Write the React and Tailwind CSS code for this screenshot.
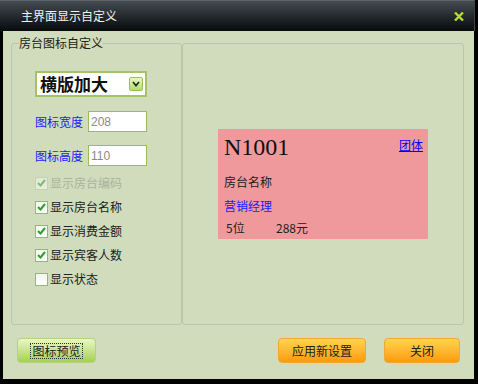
const checks = [
  { label: '显示房台编码', checked: true, disabled: true },
  { label: '显示房台名称', checked: true },
  { label: '显示消费金额', checked: true },
  { label: '显示宾客人数', checked: true },
  { label: '显示状态', checked: false },
];

function CheckBox({ checked, disabled }) {
  return (
    <span
      className={
        'w-[13px] h-[13px] flex items-center justify-center border bg-gradient-to-b from-[#f4f4f0] to-[#ffffff] ' +
        (disabled ? 'border-[#bcc8b0] opacity-50' : 'border-[#98b47c]')
      }
    >
      {checked && (
        <svg width="9" height="8" viewBox="0 0 9 8">
          <path d="M1 4 L3.5 6.5 L8 1" fill="none" stroke="#2ca02c" strokeWidth="2" />
        </svg>
      )}
    </span>
  );
}

function SizeField({ label, value }) {
  return (
    <div className="flex items-center h-[21px]">
      <span className="text-[#1a1aff] w-[53px] leading-[16px]">{label}</span>
      <div className="w-[59px] h-[21px] border border-[#9cbc5c] bg-white flex items-center pl-[2px] font-['Liberation_Sans',sans-serif] text-[12px] text-[#8a8a8a]">
        {value}
      </div>
    </div>
  );
}

export default function App() {
  return (
    <div className="w-[478px] h-[384px] bg-black flex flex-col font-['Noto_Sans_CJK_SC',sans-serif] text-[12px] text-[#202020]">
      {/* title bar */}
      <div className="h-[31px] w-[475px] flex items-center justify-between border-t border-[#5c6468] border-r border-r-[#3a4246] bg-gradient-to-b from-[#454d52] to-[#080b0d] pl-[21px] pr-[10px]">
        <span className="text-[#f2f2f2] leading-[16px]">主界面显示自定义</span>
        <svg width="10" height="9" viewBox="0 0 10 9">
          <path d="M1 0.5 L9 8.5 M9 0.5 L1 8.5" stroke="#b4dc34" strokeWidth="2.4" />
        </svg>
      </div>

      {/* body */}
      <div className="ml-[3px] w-[471px] h-[348px] bg-[#d0dcbc] flex flex-col pt-[4px]">
        <div className="flex pl-[8px]">
          <fieldset className="w-[171px] h-[290px] border border-[#bcc4b0] rounded-[3px] pl-[7px]">
            <legend className="leading-[16px] text-[#202020]">房台图标自定义</legend>
            <div className="pl-[16px] pt-[20px] flex flex-col">
              <div className="w-[112px] h-[26px] border-2 border-[#a4c464] bg-white flex items-center justify-between pl-[3px] pr-[2px]">
                <span className="text-[17px] font-bold leading-[20px] text-[#101010]">横版加大</span>
                <span className="w-[14px] h-[14px] rounded-[2px] border border-[#9cc050] bg-gradient-to-b from-[#e8f6c4] to-[#b4dc6c] flex items-center justify-center">
                  <svg width="8" height="6" viewBox="0 0 8 6">
                    <path d="M1 1 L4 4.5 L7 1" fill="none" stroke="#20301c" strokeWidth="1.8" />
                  </svg>
                </span>
              </div>
              <div className="mt-[14px]">
                <SizeField label="图标宽度" value="208" />
              </div>
              <div className="mt-[13px]">
                <SizeField label="图标高度" value="110" />
              </div>
              <div className="mt-[5px] flex flex-col">
                {checks.map((c) => (
                  <div key={c.label} className="h-[24px] flex items-center gap-[2px]">
                    <CheckBox checked={c.checked} disabled={c.disabled} />
                    <span className={'leading-[16px] ' + (c.disabled ? 'text-[#a8b49c]' : 'text-[#202020]')}>
                      {c.label}
                    </span>
                  </div>
                ))}
              </div>
            </div>
          </fieldset>

          <div className="mt-[8px] w-[282px] h-[282px] border border-[#bcc4b0] rounded-[3px] flex items-center justify-center">
            <div className="w-[210px] h-[110px] bg-[#f0999c] flex flex-col pt-[6px] pl-[6px] pr-[5px]">
              <div className="flex justify-between items-start">
                <span className="font-['Liberation_Serif',serif] text-[24px] leading-[24px] text-[#101010]">N1001</span>
                <span className="mt-[2px] leading-[16px] text-[#0000ff] underline">团体</span>
              </div>
              <span className="mt-[15px] leading-[16px]">房台名称</span>
              <span className="mt-[8px] leading-[16px] text-[#1a1aff]">营销经理</span>
              <div className="mt-[6px] flex leading-[16px]">
                <span className="ml-[2px] w-[50px]">5位</span>
                <span>288元</span>
              </div>
            </div>
          </div>
        </div>

        {/* buttons */}
        <div className="mt-[13px] flex items-center pl-[14px] pr-[14px]">
          <button className="w-[79px] h-[25px] rounded-[4px] border border-[#b4d47c] bg-gradient-to-b from-[#eaf6c6] to-[#a6d052] flex items-center justify-center">
            <span className="border border-dotted border-[#303030] px-[1px] leading-[14px] text-[#202020]">图标预览</span>
          </button>
          <div className="ml-auto flex gap-[18px]">
            <button className="w-[88px] h-[25px] rounded-[4px] border border-[#f0a838] bg-gradient-to-b from-[#ffd44c] to-[#ff9a00] leading-[16px] text-[#202020]">
              应用新设置
            </button>
            <button className="w-[76px] h-[25px] rounded-[4px] border border-[#f0a838] bg-gradient-to-b from-[#ffd44c] to-[#ff9a00] leading-[16px] text-[#202020]">
              关闭
            </button>
          </div>
        </div>
      </div>
    </div>
  );
}
